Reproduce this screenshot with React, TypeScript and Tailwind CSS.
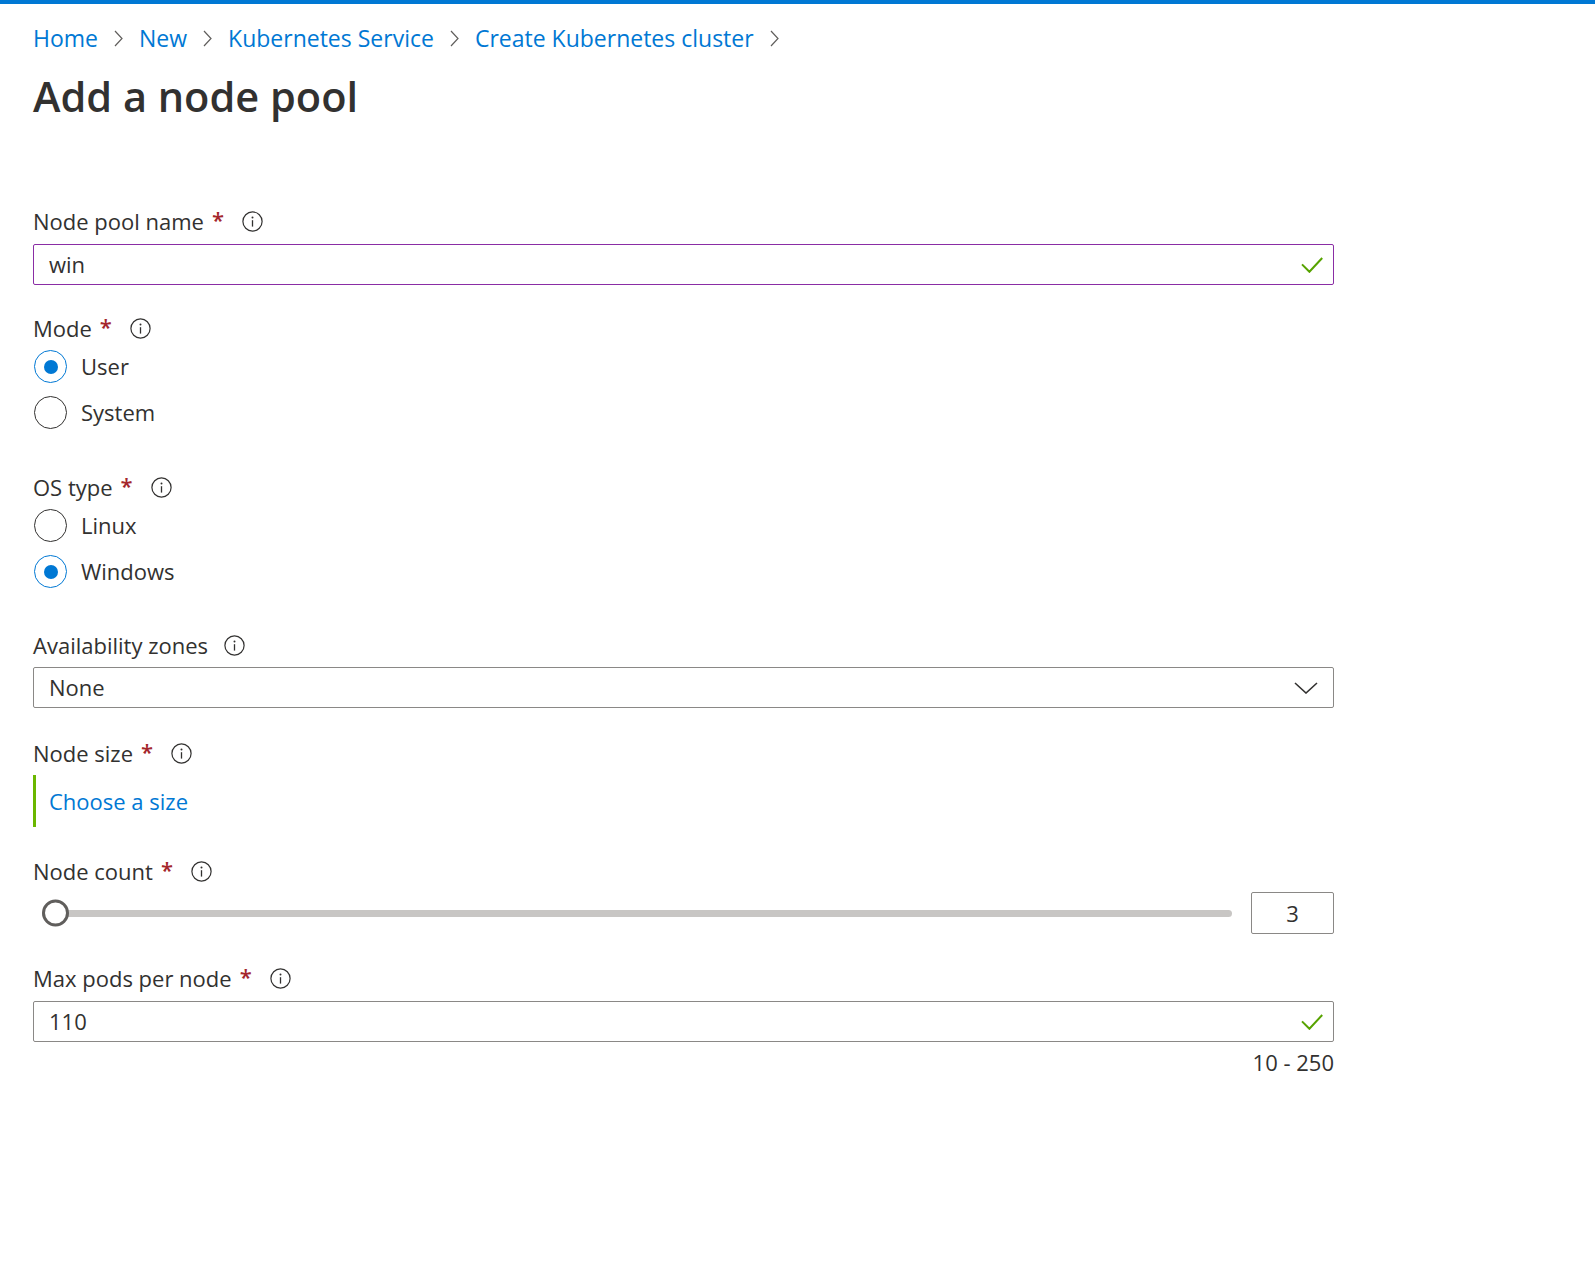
import React from "react";

/* ------------------------------------------------------------------------- */
/*                                  Icons                                    */
/* ------------------------------------------------------------------------- */

const InfoIcon = () => (
  <svg width="21" height="21" viewBox="0 0 21 21" fill="none">
    <circle cx="10.5" cy="10.5" r="9.6" stroke="#323130" strokeWidth="1.2" />
    <circle cx="10.5" cy="6.4" r="1" fill="#323130" />
    <path d="M10.5 9.2v6.4" stroke="#323130" strokeWidth="1.3" />
  </svg>
);

const CheckIcon = () => (
  <svg width="22" height="16" viewBox="0 0 22 16" fill="none">
    <path d="M1 7.4l7.4 7.4L21.2 1" stroke="#57a300" strokeWidth="2" />
  </svg>
);

const Chevron = () => (
  <svg width="9" height="17" viewBox="0 0 9 17" fill="none">
    <path d="M1 1l7 7.5L1 16" stroke="#605e5c" strokeWidth="1.2" />
  </svg>
);

const ChevronDown = () => (
  <svg width="24" height="12" viewBox="0 0 24 12" fill="none">
    <path d="M1 1l11 10L23 1" stroke="#323130" strokeWidth="1.6" />
  </svg>
);

/* ------------------------------------------------------------------------- */
/*                                  Pieces                                   */
/* ------------------------------------------------------------------------- */

interface LabelProps {
  text: string;
  required?: boolean;
  className?: string;
}

const FieldLabel = ({ text, required, className = "" }: LabelProps) => (
  <div className={`flex h-[30px] items-center ${className}`}>
    <span>{text}</span>
    {required && (
      <span className="ml-[8px] -mt-[4px] font-semibold text-[#a4262c]">*</span>
    )}
    <span className={`${required ? "ml-[18px]" : "ml-[16px]"} flex`}>
      <InfoIcon />
    </span>
  </div>
);

const Radio = ({
  label,
  checked,
  className = "",
}: {
  label: string;
  checked?: boolean;
  className?: string;
}) => (
  <div className={`flex h-[33px] items-center ${className}`}>
    <span
      className={`ml-[1px] flex h-[33px] w-[33px] items-center justify-center rounded-full border ${
        checked ? "border-[#0078d4]" : "border-[#323130]"
      }`}
    >
      {checked && <span className="h-[14px] w-[14px] rounded-full bg-[#0078d4]" />}
    </span>
    <span className="ml-[14px]">{label}</span>
  </div>
);

const crumbs = ["Home", "New", "Kubernetes Service", "Create Kubernetes cluster"];

/* ------------------------------------------------------------------------- */
/*                                   Page                                    */
/* ------------------------------------------------------------------------- */

export default function App() {
  return (
    <div className="min-h-screen bg-white font-['Open_Sans',sans-serif] text-[22px] text-[#323130]">
      <div className="h-[4px] bg-[#0078d4]" />

      <div className="px-[33px]">
        {/* Breadcrumb */}
        <nav className="mt-[19px] flex h-[30px] items-center text-[23px] text-[#0078d4]">
          {crumbs.map((c) => (
            <React.Fragment key={c}>
              <span>{c}</span>
              <span className="mx-[16px] flex">
                <Chevron />
              </span>
            </React.Fragment>
          ))}
        </nav>

        <h1 className="mt-[15px] text-[41.5px] font-semibold leading-[56px] text-[#323130]">
          Add a node pool
        </h1>

        {/* Form */}
        <div className="mt-[82px] w-[1301px]">
          <FieldLabel text="Node pool name" required />
          <div className="mt-[8px] flex h-[41px] items-center justify-between rounded-[2px] border border-[#8a2da5] pl-[15px] pr-[10px]">
            <span>win</span>
            <CheckIcon />
          </div>

          <FieldLabel text="Mode" required className="mt-[28px]" />
          <Radio label="User" checked className="mt-[7px]" />
          <Radio label="System" className="mt-[13px]" />

          <FieldLabel text="OS type" required className="mt-[43px]" />
          <Radio label="Linux" className="mt-[7px]" />
          <Radio label="Windows" checked className="mt-[13px]" />

          <FieldLabel text="Availability zones" className="mt-[42px]" />
          <div className="mt-[7px] flex h-[41px] items-center justify-between rounded-[2px] border border-[#8a8886] pl-[15px] pr-[15px]">
            <span>None</span>
            <ChevronDown />
          </div>

          <FieldLabel text="Node size" required className="mt-[30px]" />
          <div className="mt-[7px] flex h-[52px] items-center border-l-[3px] border-[#6bb700] pl-[13px] text-[#0078d4]">
            Choose a size
          </div>

          <FieldLabel text="Node count" required className="mt-[29px]" />
          <div className="mt-[6px] flex h-[42px] items-center">
            <div className="flex flex-1 items-center pl-[9px] pr-[19px]">
              <div className="relative h-[7px] flex-1 rounded-full bg-[#c8c6c4]">
                <span className="absolute left-0 top-1/2 h-[27px] w-[27px] -translate-y-1/2 rounded-full border-[3px] border-[#605e5c] bg-white" />
              </div>
            </div>
            <div className="flex h-[42px] w-[83px] items-center justify-center rounded-[2px] border border-[#8a8886]">
              3
            </div>
          </div>

          <FieldLabel text="Max pods per node" required className="mt-[29px]" />
          <div className="mt-[8px] flex h-[41px] items-center justify-between rounded-[2px] border border-[#8a8886] pl-[15px] pr-[10px]">
            <span>110</span>
            <CheckIcon />
          </div>
          <div className="mt-[5px] flex h-[30px] items-center justify-end">10 - 250</div>
        </div>
      </div>
    </div>
  );
}
